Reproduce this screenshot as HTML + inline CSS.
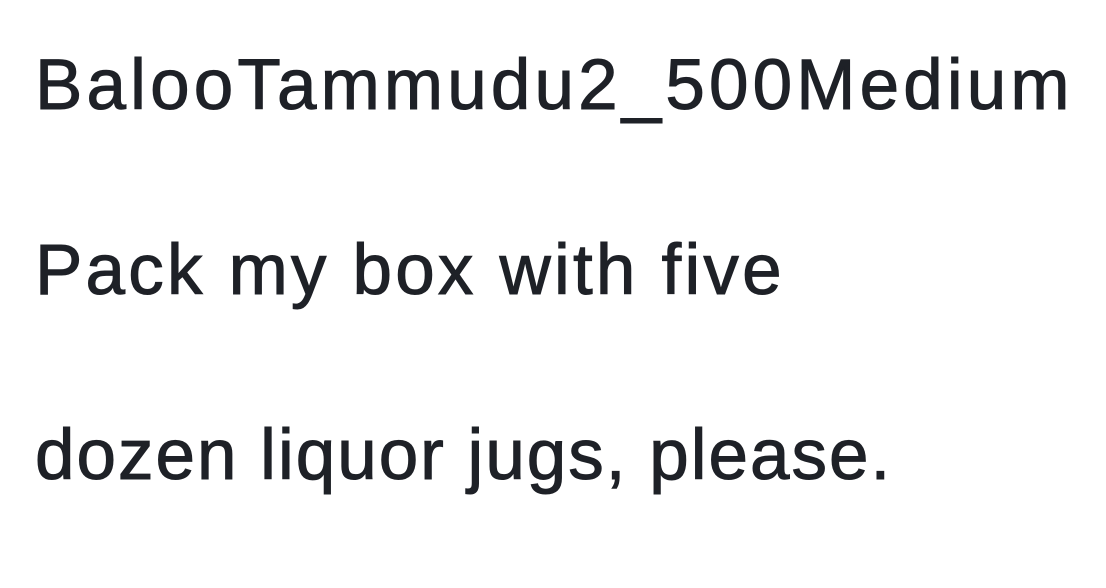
<!DOCTYPE html>
<html><head><meta charset="utf-8"><style>
html,body{margin:0;padding:0;background:#fff;width:1106px;height:588px;overflow:hidden}
.t{position:absolute;left:35px;font-family:"Liberation Sans",sans-serif;font-size:71px;line-height:71px;color:#1e2127;white-space:nowrap;-webkit-text-stroke:1px #1e2127}
</style></head><body>
<div class="t" style="top:50px;letter-spacing:4.15px">BalooTammudu2_500Medium</div>
<div class="t" style="top:235px;letter-spacing:3.2px">Pack my box with five</div>
<div class="t" style="top:420px;letter-spacing:2.0px">dozen liquor jugs, please.</div>
</body></html>
